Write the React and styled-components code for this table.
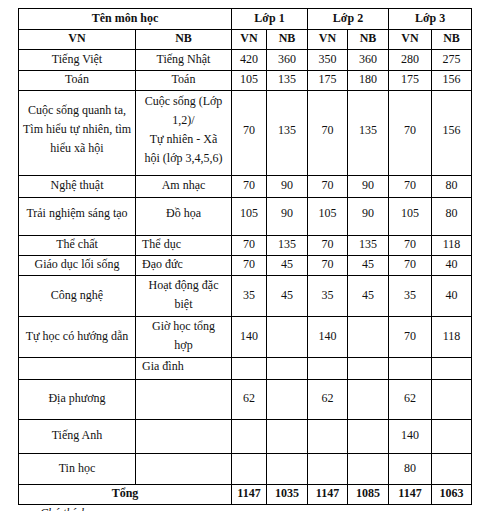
import styled, { createGlobalStyle } from "styled-components";

const serif = `"Liberation Serif", "Times New Roman", Times, "DejaVu Serif", serif`;

const GlobalStyle = createGlobalStyle`
  html, body {
    margin: 0;
    padding: 0;
    background: #ffffff;
    font-family: ${serif};
  }
`;

const colWidths = [117, 96, 35, 41, 40, 41, 43, 40];

const rows = [
  { vn: 'Tiếng Việt', nb: 'Tiếng Nhật', v: [420, 360, 350, 360, 280, 275], h: 21 },
  { vn: 'Toán', nb: 'Toán', v: [105, 135, 175, 180, 175, 156], h: 20 },
  {
    vn: ['Cuộc sống quanh ta,', 'Tìm hiểu tự nhiên, tìm', 'hiểu xã hội'],
    nb: ['Cuộc sống (Lớp', '1,2)/', 'Tự nhiên - Xã', 'hội (lớp 3,4,5,6)'],
    v: [70, 135, 70, 135, 70, 156], h: 85, lift: 7,
  },
  { vn: 'Nghệ thuật', nb: 'Am nhạc', v: [70, 90, 70, 90, 70, 80], h: 22 },
  { vn: 'Trải nghiệm sáng tạo', nb: 'Đồ họa', v: [105, 90, 105, 90, 105, 80], h: 38, lift: 8 },
  { vn: 'Thể chất', nb: 'Thể dục', left: true, v: [70, 135, 70, 135, 70, 118], h: 20 },
  { vn: 'Giáo dục lối sống', nb: 'Đạo đức', left: true, v: [70, 45, 70, 45, 70, 40], h: 20 },
  { vn: 'Công nghệ', nb: ['Hoạt động đặc', 'biệt'], v: [35, 45, 35, 45, 35, 40], h: 41, lift: 2 },
  { vn: 'Tự học có hướng dẫn', nb: ['Giờ học tổng', 'hợp'], v: [140, '', 140, '', 70, 118], h: 41, lift: 2 },
  { vn: '', nb: 'Gia đình', left: true, v: ['', '', '', '', '', ''], h: 21, lift: 5 },
  { vn: 'Địa phương', nb: '', v: [62, '', 62, '', 62, ''], h: 40 },
  { vn: 'Tiếng Anh', nb: '', v: ['', '', '', '', 140, ''], h: 34 },
  { vn: 'Tin học', nb: '', v: ['', '', '', '', 80, ''], h: 31 },
];

const totals = [1147, 1035, 1147, 1085, 1147, 1063];

function Lines({ text }) {
  if (!Array.isArray(text)) return text;
  return text.map((t, i) => <Line key={i}>{t}</Line>);
}

export default function App() {
  return (
    <>
      <GlobalStyle />
      <Page>
        <Table>
          <colgroup>
            {colWidths.map((w, i) => (
              <col key={i} style={{ width: w }} />
            ))}
          </colgroup>
          <tbody>
            <Row $h={21}>
              <HeadCell colSpan={2}>Tên môn học</HeadCell>
              <HeadCell colSpan={2}>Lớp 1</HeadCell>
              <HeadCell colSpan={2}>Lớp 2</HeadCell>
              <HeadCell colSpan={2}>Lớp 3</HeadCell>
            </Row>
            <Row $h={20}>
              <HeadCell>VN</HeadCell>
              <HeadCell>NB</HeadCell>
              <HeadCell>VN</HeadCell>
              <HeadCell>NB</HeadCell>
              <HeadCell>VN</HeadCell>
              <HeadCell>NB</HeadCell>
              <HeadCell>VN</HeadCell>
              <HeadCell>NB</HeadCell>
            </Row>
            {rows.map((r, i) => (
              <Row key={i} $h={r.h}>
                <Cell $lift={r.lift}><Lines text={r.vn} /></Cell>
                <Cell $lift={r.lift} $left={r.left}><Lines text={r.nb} /></Cell>
                {r.v.map((n, j) => (
                  <NumCell key={j} $lift={r.lift}>{n}</NumCell>
                ))}
              </Row>
            ))}
            <Row $h={20}>
              <HeadCell colSpan={2}>Tổng</HeadCell>
              {totals.map((n, j) => (
                <HeadCell key={j}>{n}</HeadCell>
              ))}
            </Row>
          </tbody>
        </Table>
        <Note>Chú thích:</Note>
      </Page>
    </>
  );
}

const Page = styled.div`
  padding: 8px 0 0 18px;
  font-family: ${serif};
  color: #111;
`;

const Table = styled.table`
  border-collapse: collapse;
  table-layout: fixed;
  width: 454px;
  font-family: ${serif};
  font-size: 12px;
  color: #111;
`;

const Row = styled.tr`
  height: ${(p) => p.$h}px;
`;

const Cell = styled.td`
  border: 1px solid #000;
  padding: 0 4px ${(p) => p.$lift ?? 3}px;
  padding-left: ${(p) => (p.$left ? '6px' : '4px')};
  text-align: ${(p) => (p.$left ? 'left' : 'center')};
  vertical-align: middle;
  line-height: 16px;
  white-space: nowrap;
  font-family: ${serif};
`;

const Line = styled.span`
  display: block;
  line-height: 19px;
`;

const NumCell = styled(Cell)`
  padding-left: 0;
  padding-right: 0;
  text-align: center;
`;

const HeadCell = styled.td`
  border: 1px solid #000;
  padding: 0 0 3px;
  text-align: center;
  vertical-align: middle;
  font-weight: bold;
  line-height: 16px;
  font-family: ${serif};
`;

const Note = styled.div`
  margin: 1px 0 0 22px;
  font-family: ${serif};
  font-style: italic;
  font-size: 12px;
  line-height: 14px;
`;
